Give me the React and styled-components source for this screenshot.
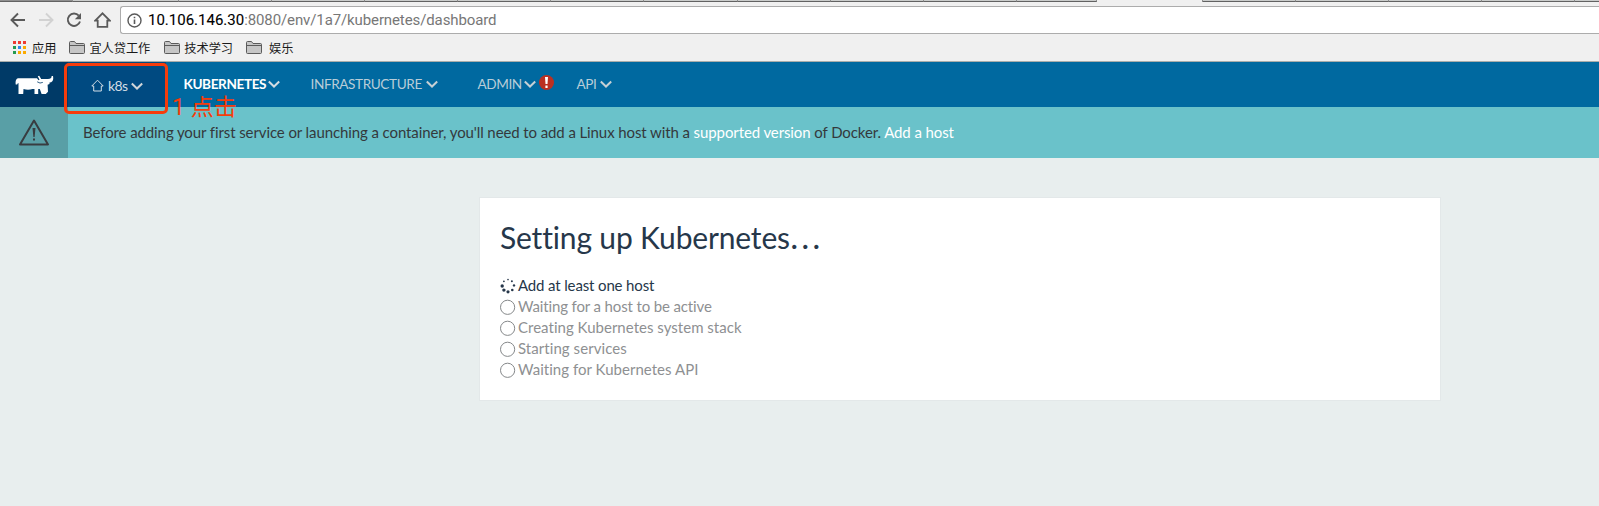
import React from "react";
import styled, { createGlobalStyle } from "styled-components";

const Global = createGlobalStyle`
  * { box-sizing: border-box; }
  body { margin: 0; background: #e8eeee; font-family: Lato, sans-serif; font-variant-ligatures: none; }
`;

const Page = styled.div`
  height: 506px;
  overflow: hidden;
  background: #e8eeee;
`;
const Chrome = styled.header`
  height: 62px;
  background: #f0f0f0;
  border-bottom: 1px solid #a9adab;
  display: flex;
  flex-direction: column;
`;
const TabStrip = styled.div`
  height: 2px;
  flex: none;
  display: flex;
`;
const Tab = styled.div`
  width: ${(p) => p.$w}px;
  flex: none;
  background: ${(p) => (p.$active ? "#f0f0f0" : p.$dark ? "#8f8f8f" : "#cacccb")};
  border-right: 1px solid #8d8d8d;
  border-bottom: ${(p) => (p.$active ? "0" : "1px solid #626262")};
`;
const Toolbar = styled.div`
  height: 32px;
  padding: 4px 0 0 10px;
  display: flex;
  align-items: flex-start;
`;
const NavButtons = styled.div`
  display: flex;
  gap: 12px;
  width: 110px;
  flex: none;
  padding-top: 6px;
`;
const AddressBar = styled.div`
  flex: 1;
  height: 28px;
  border: 1px solid #acacac;
  border-right: 0;
  border-radius: 3px 0 0 3px;
  background: #fff;
  display: flex;
  align-items: center;
  padding-left: 6px;
  font: 15px/26px Roboto, sans-serif;
  color: #777;
`;
const Url = styled.span`
  margin-left: 6px;
  white-space: nowrap;
  letter-spacing: -0.11px;
`;
const Host = styled.span`
  color: #000;
  letter-spacing: 0;
  -webkit-text-stroke: 0.1px #000;
`;
const Bookmarks = styled.nav`
  flex: 1;
  display: flex;
  align-items: center;
  padding: 0 0 0 12px;
`;
const Bookmark = styled.span`
  display: flex;
  align-items: center;
  gap: ${(p) => p.$gap || 4.5}px;
  margin-right: ${(p) => p.$mr || 13}px;
  color: #1a1a1a;
  font: 12.2px/18px "Noto Sans CJK SC", sans-serif;
`;
const NavBar = styled.nav`
  height: 45px;
  background: #0069a0;
  display: flex;
`;
const Brand = styled.div`
  width: 68px;
  background: #003a67;
  padding: 13px 0 0 15px;
`;
const EnvMenu = styled.div`
  position: relative;
  width: 98px;
  background: #004a81;
  color: #d3dee6;
  display: flex;
  align-items: center;
  padding: 2px 0 0 23px;
`;
const EnvName = styled.span`
  margin: 0 3px 0 4px;
  font-size: 14px;
  letter-spacing: -0.6px;
`;
const Highlight = styled.div`
  position: absolute;
  left: -4px;
  top: 1px;
  width: 104px;
  height: 51px;
  border: 3px solid #f63c0c;
  border-radius: 5px;
  z-index: 2;
`;
const Note = styled.div`
  position: absolute;
  left: 104px;
  top: 35px;
  z-index: 2;
  color: #f63c0c;
  white-space: nowrap;
  font: 400 23px/22px Roboto, "Noto Sans CJK SC", sans-serif;
`;
const MenuItem = styled.div`
  display: flex;
  align-items: center;
  gap: ${(p) => p.$gap || 2}px;
  width: ${(p) => p.$w}px;
  padding-bottom: 1px;
  font-size: 13.6px;
  letter-spacing: -0.4px;
  font-weight: ${(p) => (p.$active ? 700 : 400)};
  color: ${(p) => (p.$active ? "#fff" : "#b9cdd8")};
`;
const Menus = styled.div`
  display: flex;
  padding-left: 17.5px;
`;
const Alert = styled.span`
  width: 15px;
  height: 15px;
  border-radius: 50%;
  background: #bb3022;
  display: flex;
  align-items: center;
  justify-content: center;
  margin-top: -3px;
`;
const Banner = styled.div`
  height: 51px;
  background: #6ac2ca;
  display: flex;
  color: #34393c;
  font-size: 15px;
  line-height: 50px;
  letter-spacing: -0.1px;
`;
const BannerIcon = styled.div`
  width: 68px;
  background: #599fa6;
  padding: 12px 0 0 18px;
  margin-right: 15px;
  line-height: 0;
`;
const Link = styled.a`
  color: #fff;
`;
const Card = styled.main`
  width: 962px;
  height: 204px;
  margin: 39px 0 0 479px;
  background: #fff;
  border: 1px solid #e3e8e9;
  padding: 18px 20px;
  color: #26374a;
`;
const Title = styled.h1`
  margin: 0 0 16px;
  height: 43px;
  font-weight: 400;
  font-size: 30px;
  line-height: 43px;
  letter-spacing: -0.16px;
`;
const Ellipsis = styled.span`
  font-size: 45px;
  font-weight: 300;
  line-height: 0;
  margin-left: -1px;
`;
const Step = styled.div`
  height: 21px;
  display: flex;
  align-items: center;
  gap: 2px;
  font-size: 15px;
  line-height: 21px;
  letter-spacing: ${(p) => p.$track}px;
  color: ${(p) => (p.$active ? "#26374a" : "#8e9092")};
`;

const Chevron = ({ color }) => (
  <svg width="12" height="8" viewBox="0 0 12 8" fill="none" stroke={color} strokeWidth="2">
    <path d="M.8 1.5 6 6.5 11.2 1.5" />
  </svg>
);
const Folder = () => (
  <svg width="16" height="13" viewBox="0 0 16 13" fill="#c6c6c6" stroke="#5b5b5b">
    <path d="M.5 11.5V1.5q0-1 1-1H5.5L7 2.5H14.5q1 0 1 1V11.5q0 1-1 1H1.5q-1 0-1-1ZM.5 4.5H15.5" />
  </svg>
);
const appColors = ["#ee3a30", "#ee3a30", "#ee3a30", "#249a50", "#2f86ee", "#fbaa00", "#249a50", "#fbaa00", "#fbaa00"];
const Apps = () => (
  <svg width="14" height="14" shapeRendering="crispEdges">
    {appColors.map((c, i) => (
      <rect key={i} x={1 + (i % 3) * 5} y={Math.floor(i / 3) * 5} width="3" height="3" fill={c} />
    ))}
  </svg>
);
const Arrow = ({ color, flip }) => (
  <svg width="16" height="16" viewBox="0 0 16 16" fill="none" stroke={color} strokeWidth="1.9">
    <path d={flip ? "M1 8H14.2M8 1.5 14.5 8 8 14.5" : "M15 8H1.8M8 1.5 1.5 8 8 14.5"} />
  </svg>
);
const dots = [
  [8, 1.6, 0.8], [11.9, 3.2, 1], [14, 7.4, 1.2], [12.3, 12, 1.3],
  [8, 13.8, 1.6], [3.9, 12.1, 1.7], [2.2, 8, 1.7], [3.9, 3.3, 0.9],
];
const Spinner = () => (
  <svg width="16" height="16" fill="#26374a">
    {dots.map(([x, y, r]) => <circle key={x + "-" + y} cx={x} cy={y} r={r} />)}
  </svg>
);
const Ring = () => (
  <svg width="16" height="16" fill="none" stroke="#85888a">
    <circle cx="7.6" cy="8.3" r="7.1" />
  </svg>
);

const tabs = [
  { w: 73, dark: true }, { w: 106 }, { w: 93 }, { w: 93 }, { w: 93 }, { w: 93 }, { w: 93 },
  { w: 94 }, { w: 93 }, { w: 93 }, { w: 93 }, { w: 80 }, { w: 106, active: true },
  { w: 93 }, { w: 93 }, { w: 93 }, { w: 93 }, { w: 30 },
];
const steps = [
  ["Add at least one host", -0.14],
  ["Waiting for a host to be active", -0.14],
  ["Creating Kubernetes system stack", 0.02],
  ["Starting services", 0.06],
  ["Waiting for Kubernetes API", 0.03],
];

export default function App() {
  return (
    <Page>
      <Global />
      <Chrome>
        <TabStrip>
          {tabs.map((t, i) => <Tab key={i} $w={t.w} $dark={t.dark} $active={t.active} />)}
        </TabStrip>
        <Toolbar>
          <NavButtons>
            <Arrow color="#5a5a5a" />
            <Arrow color="#d2d2d2" flip />
            <svg width="16" height="16" viewBox="0 0 16 16" fill="none" stroke="#5a5a5a" strokeWidth="1.9">
              <path d="M12.8 3.7A6.2 6.2 0 1 0 14 9.5" />
              <path d="M15 1V7.2H8.8Z" fill="#5a5a5a" stroke="none" />
            </svg>
            <svg width="17" height="16" viewBox="0 0 17 16" fill="none" stroke="#5a5a5a" strokeWidth="1.8">
              <path d="M1.2 8.6 8.5 1.3 15.8 8.6H13.3V14.8H3.7V8.6Z" />
            </svg>
          </NavButtons>
          <AddressBar>
            <svg width="15" height="15" viewBox="0 0 15 15" fill="none" stroke="#5a5a5a" strokeWidth="1.4">
              <circle cx="7.5" cy="7.5" r="6.5" />
              <path d="M7.5 6.5V11M7.5 3.7V5.2" strokeWidth="1.6" />
            </svg>
            <Url><Host>10.106.146.30</Host>:8080/env/1a7/kubernetes/dashboard</Url>
          </AddressBar>
        </Toolbar>
        <Bookmarks>
          <Bookmark $gap={6} $mr={12.5}><Apps />应用</Bookmark>
          <Bookmark $mr={13.5}><Folder />宜人贷工作</Bookmark>
          <Bookmark><Folder />技术学习</Bookmark>
          <Bookmark $gap={7}><Folder />娱乐</Bookmark>
        </Bookmarks>
      </Chrome>
      <NavBar>
        <Brand>
          <svg width="39" height="20" viewBox="0 0 39 20" fill="#fff">
            <path d="M3 3.2H22L23.5 5.2L24.5 4.8L22.8 1.2L24.2 .8L26.2 4H33Q36.8 4 36.6 1H38Q39.2 7 34.5 7.6V9L32.6 9.8L33 16.8L30.8 19H26.6L24.8 14H23.2V19H19.5V14H17.5Q13 15.5 8.5 14L8.2 19H3.5V8Q2.4 8 2.2 9.5H.7Q0 4 3 3.2Z" />
            <path d="M22.2 6.8Q25 9 27.8 7.4" fill="none" stroke="#003a67" strokeWidth=".8" />
          </svg>
        </Brand>
        <EnvMenu>
          <svg width="13" height="13" viewBox="0 0 13 13" fill="none" stroke="#d3dee6">
            <path d="M.8 7 6.5 1.2 12.2 7H10.3V12H2.7V7Z" />
          </svg>
          <EnvName>k8s</EnvName>
          <Chevron color="#d0d5d8" />
          <Highlight />
          <Note>1 点击</Note>
        </EnvMenu>
        <Menus>
          <MenuItem $w={127} $active>KUBERNETES<Chevron color="#d2dce2" /></MenuItem>
          <MenuItem $w={167} $gap={4}>INFRASTRUCTURE<Chevron color="#c5d0d5" /></MenuItem>
          <MenuItem $w={99} $gap={2.5}>ADMIN<Chevron color="#c5d0d5" />
            <Alert>
              <svg width="3" height="11" fill="#fff"><path d="M0 0H3L2.5 7H.5ZM.4 8.5H2.6V11H.4Z" /></svg>
            </Alert>
          </MenuItem>
          <MenuItem $w={60} $gap={3.5}>API<Chevron color="#c5d0d5" /></MenuItem>
        </Menus>
      </NavBar>
      <Banner>
        <BannerIcon>
          <svg width="32" height="28" viewBox="0 0 32 28" fill="none" stroke="#383c40" strokeWidth="2" strokeLinejoin="round">
            <path d="M16 1.5 30 25.5H2Z" />
            <path d="M14.5 9H17.5L16.6 18H15.4ZM15 19.5H17V21.5H15Z" fill="#383c40" stroke="none" />
          </svg>
        </BannerIcon>
        <div>
          Before adding your first service or launching a container, you'll need to add a Linux host with a{" "}
          <Link>supported version</Link> of Docker. <Link>Add a host</Link>
        </div>
      </Banner>
      <Card>
        <Title>Setting up Kubernetes<Ellipsis>…</Ellipsis></Title>
        {steps.map(([label, track], i) => (
          <Step key={label} $active={i === 0} $track={track}>{i === 0 ? <Spinner /> : <Ring />}{label}</Step>
        ))}
      </Card>
    </Page>
  );
}
